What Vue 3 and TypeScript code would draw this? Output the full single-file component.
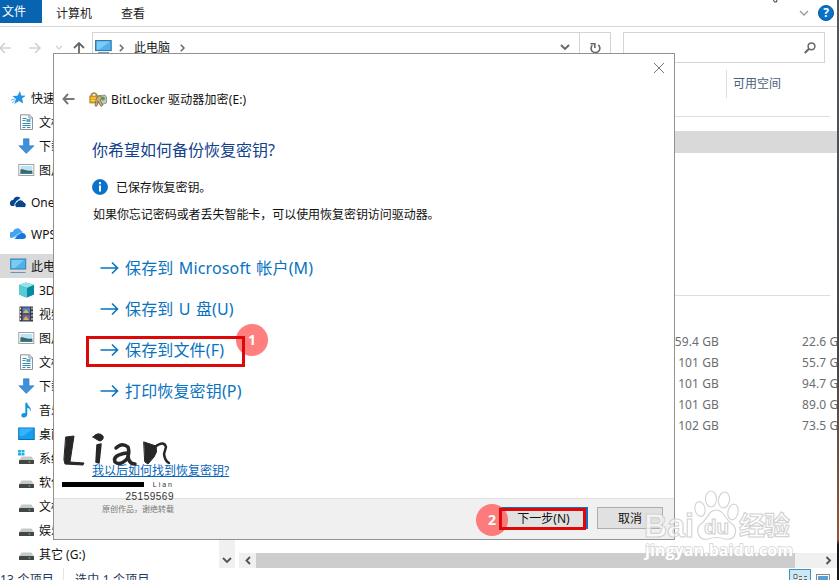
<script setup lang="ts">
interface NavItem {
  label: string
  icon: string
  level?: number
  gap?: boolean
  active?: boolean
}

const navItems: NavItem[] = [
  { label: '快速访问', icon: 'star' },
  { label: '文档', icon: 'doc', level: 1 },
  { label: '下载', icon: 'down', level: 1 },
  { label: '图片', icon: 'pic', level: 1 },
  { label: 'OneDrive', icon: 'onedrive', gap: true },
  { label: 'WPS网盘', icon: 'wps', gap: true },
  { label: '此电脑', icon: 'pc', gap: true, active: true },
  { label: '3D 对象', icon: 'cube', level: 1 },
  { label: '视频', icon: 'film', level: 1 },
  { label: '图片', icon: 'pic', level: 1 },
  { label: '文档', icon: 'doc', level: 1 },
  { label: '下载', icon: 'down', level: 1 },
  { label: '音乐', icon: 'music', level: 1 },
  { label: '桌面', icon: 'desk', level: 1 },
  { label: '系统', icon: 'sysdrive', level: 1 },
  { label: '软件', icon: 'drive', level: 1 },
  { label: '文档', icon: 'drive', level: 1 },
  { label: '娱乐', icon: 'drive', level: 1 },
  { label: '其它 (G:)', icon: 'drive', level: 1 },
]

const drives = [
  { total: '59.4 GB', free: '22.6 GB' },
  { total: '101 GB', free: '55.7 GB' },
  { total: '101 GB', free: '94.7 GB' },
  { total: '101 GB', free: '89.0 GB' },
  { total: '102 GB', free: '73.5 GB' },
]

const options = ['保存到 Microsoft 帐户(M)', '保存到 U 盘(U)', '保存到文件(F)', '打印恢复密钥(P)']
</script>

<template>
  <div class="screen">
    <div class="explorer">
      <header class="menu">
        <span class="tab-file">文件</span>
        <span class="tab">计算机</span>
        <span class="tab view">查看</span>
        <svg class="menu-chev" width="10" height="6" viewBox="0 0 10 6"><path d="M1 1l4 4 4-4" fill="none" stroke="#999" stroke-width="1.3" /></svg>
        <span class="help">?</span>
      </header>
      <div class="toolbar">
        <svg class="history" width="92" height="30" viewBox="0 0 92 30" fill="none">
          <g stroke="#d2d2d2" stroke-width="1.6"><path d="M11 16H0M5 11l-5 5 5 5" /><path d="M29 16h11M35 11l5 5-5 5" /><path d="M56 14l3 3 3-3" stroke-width="1.2" /></g>
          <path d="M79 23V11M74 16l5-5 5 5" stroke="#666" stroke-width="1.8" />
        </svg>
        <div class="address">
          <svg width="18" height="15" viewBox="0 0 18 15"><rect x=".6" y=".6" width="15.6" height="10" fill="#4db2ee" stroke="#286f9c" /><path d="M2 1.500h13L4 9.500H2z" fill="#7ccaf5" /><path d="M3 12.500h11" stroke="#7aa0b5" /></svg>
          <svg class="crumb" width="5" height="8" viewBox="0 0 5 8"><path d="M.8.8L4 4 .8 7.200" fill="none" stroke="#666" stroke-width="1.500" /></svg>
          <span class="path">此电脑</span>
          <svg class="crumb end" width="5" height="8" viewBox="0 0 5 8"><path d="M.8.8L4 4 .8 7.200" fill="none" stroke="#666" stroke-width="1.500" /></svg>
          <svg class="drop" width="10" height="7" viewBox="0 0 10 7"><path d="M1 1l4 4 4-4" fill="none" stroke="#666" stroke-width="1.900" /></svg>
          <span class="refresh"><svg width="12" height="12" viewBox="0 0 12 12"><path d="M9.200 2.800A4.400 4.400 0 1 1 3.300 3.200M1.500 1.700h4.300V6" fill="none" stroke="#666" stroke-width="1.600" /></svg></span>
        </div>
        <div class="search"><svg width="12" height="12" viewBox="0 0 12 12" fill="none" stroke="#666"><circle cx="7.500" cy="4.300" r="3.400" stroke-width="1.500" /><path d="M5 6.800L.8 11" stroke-width="2" /></svg></div>
      </div>
      <div class="body">
        <nav class="nav">
          <div v-for="(item, i) in navItems" :key="i" class="nav-row" :class="{ child: item.level, gap: item.gap, active: item.active }">
            <svg class="nav-icon" width="17" height="16" viewBox="0 0 17 16">
              <template v-if="item.icon === 'star'"><path d="M10 1l1.200 4.500 4.500.2-3.600 2.900 1.100 5-4.200-2.600-4.600 3 1.600-5.100-3.500-2.900 5-.3z" fill="#2794e3" /><path d="M1 10l4-1M2 13l4-3" stroke="#64b9f2" /></template>
              <template v-else-if="item.icon === 'doc'"><path d="M2.500.8h9l3 3v11.700h-12z" fill="#fafcfd" stroke="#8c9499" /><path d="M11 1v3h3.500" fill="none" stroke="#8c9499" /><path d="M4.500 4.500h4M4.500 6.500h3M4.500 9.500h8M4.500 11.500h8M4.500 13.500h3M9 13.500h3.500" stroke="#3a8dab" /><rect x="8.500" y="5" width="4" height="3" fill="#5ba7cc" /></template>
              <path v-else-if="item.icon === 'down'" d="M5.500.8h5.500v7h5L8.300 15.500.8 7.800h4.700z" fill="#3d91dc" stroke="#2a75bb" stroke-width=".6" />
              <template v-else-if="item.icon === 'pic'"><rect x=".8" y="2.500" width="15" height="11" fill="#fff" stroke="#a2a2a2" /><path d="M2.500 4h11.800v8H2.500z" fill="#bce2f5" /><path d="M2.500 7.500c3-1 5 2 11.800 1V12H2.500z" fill="#36685c" /><path d="M2.500 10.500h11.800V12H2.500z" fill="#3f78a1" /></template>
              <template v-else-if="item.icon === 'onedrive'"><path d="M1.500 12A3.200 3.200 0 0 1 3.200 6 4.300 4.300 0 0 1 10.500 4L6 7.500 4.500 12z" fill="#07478f" /><path d="M6.500 13.500A3 3 0 0 1 6.800 8a4 4 0 0 1 7.200.2 2.800 2.800 0 0 1 .5 5.300z" fill="#07478f" stroke="#fff" stroke-width=".8" /></template>
              <template v-else-if="item.icon === 'wps'"><path d="M1.500 12A3 3 0 0 1 3 6a4.300 4.300 0 0 1 8-1.500c2 1 1 3 2 4z" fill="#43a4f4" /><path d="M4 13c2 0 3-5 7-6 3-.5 5 1.500 5 3.500 0 1.500-1 2.500-3 2.500z" fill="#1677da" /><path d="M3 12q4-4 8-5" fill="none" stroke="#b8ddff" stroke-width=".8" /></template>
              <template v-else-if="item.icon === 'pc'"><rect x=".7" y="1" width="15" height="10" fill="#4bb2ec" stroke="#3281b6" /><path d="M1.500 2H14L5 10H1.500z" fill="#7acbf4" /><path d="M.5 14.500h15" stroke="#6696b4" /></template>
              <template v-else-if="item.icon === 'cube'"><path d="M1 3l7-2.500L16 3v9.500l-8 3-7-3z" fill="#20aabd" /><path d="M1 3l7-2.500L16 3 9 6z" fill="#95e3e7" /><path d="M1 3l8 3v9.500l-8-3z" fill="#54cbd5" /><path d="M16 3v9.500L9 15.500V6z" fill="#078ba5" /></template>
              <template v-else-if="item.icon === 'film'"><rect x="1.500" y=".5" width="13.500" height="15" fill="#363940" /><path d="M2.500 1.500v14M14 1.500v14" stroke="#ddd" stroke-dasharray="2 1.500" stroke-width="1.200" /><rect x="4.500" y="1.500" width="7.500" height="6" fill="#537fc7" /><rect x="4.500" y="8.500" width="7.500" height="6" fill="#6f60a3" /><path d="M5 7l3-4 3 4M5 14l3-4 3 4" fill="#d5b64d" /></template>
              <path v-else-if="item.icon === 'music'" d="M7.300.8h2c0 3.500 4.800 4 3.200 9-.3-2.700-1.200-3.500-3.200-4v6.700c0 3.600-6 4-6 1 0-2.200 2.200-2.900 4-2.300z" fill="#1496df" />
              <template v-else-if="item.icon === 'desk'"><rect x=".7" y="2" width="15.500" height="11.500" fill="#159ff0" stroke="#0870b3" /><path d="M1.500 2.500h14L5 10H1.500z" fill="#35b4fb" /></template>
              <template v-else><path d="M3.500 6.500h10l2.500 4H1z" fill="#c7c8c8" /><rect x="1" y="10" width="15" height="4" rx=".5" fill="#454747" /><circle cx="11.500" cy="12" r=".8" fill="#5fda65" /><path v-if="item.icon === 'sysdrive'" d="M0 0h3v2.500H0zM3.500 0h3v2.500h-3zM0 3h3v2.500H0zM3.500 3h3v2.500h-3z" fill="#20b1ea" /></template>
            </svg>
            <span>{{ item.label }}</span>
          </div>
        </nav>
        <div class="nav-scroll"><svg width="10" height="7" viewBox="0 0 10 7"><path d="M1 1l4 4 4-4" fill="none" stroke="#555" stroke-width="1.900" /></svg></div>
        <main class="files">
          <div class="columns"><span class="col-free">可用空间</span></div>
          <div class="rule first"></div>
          <div class="selected"></div>
          <div class="rule second"></div>
          <div class="drive-list">
            <div v-for="(d, i) in drives" :key="i" class="drive-row"><span class="total">{{ d.total }}</span><span class="free">{{ d.free }}</span></div>
          </div>
          <div class="hscroll">
            <svg width="17" height="15" viewBox="0 0 17 15"><path d="M11 4L7.500 7.500 11 11" fill="none" stroke="#555" stroke-width="1.900" /></svg>
            <span class="thumb"></span>
            <svg class="right-arrow" width="17" height="15" viewBox="0 0 17 15"><path d="M6.500 4L10 7.500 6.500 11" fill="none" stroke="#555" stroke-width="1.900" /></svg>
          </div>
        </main>
      </div>
      <footer class="status">
        <span class="count">13 个项目</span><span class="picked">选中 1 个项目</span>
        <span class="views">
          <svg width="22" height="14" viewBox="0 0 22 14"><rect x=".5" y=".5" width="21" height="16" fill="#cce8f5" stroke="#3b94bd" /><path d="M5 5.500h3v4H5zM10 7.500h3M15 7.500h3M10 10.500h3M15 10.500h3" fill="#fff" stroke="#666" /></svg>
          <svg width="14" height="14" viewBox="0 0 14 14"><rect x=".5" y="5.500" width="13" height="11" fill="#fff" stroke="#888" /><path d="M2 7h10v6H2z" fill="#5b9ed4" /></svg>
        </span>
      </footer>
    </div>
    <div class="desktop-edge"></div>
    <svg class="cursor-tip" width="5" height="3" viewBox="0 0 5 3"><path d="M.5 0l1 2h2l.5-2" fill="#fff" stroke="#333" /></svg>

    <section class="dialog">
      <div class="dialog-close"><svg width="12" height="12" viewBox="0 0 12 12"><path d="M1 1l10 10M11 1L1 11" stroke="#777" /></svg></div>
      <div class="dialog-title">
        <svg class="back" width="13" height="12" viewBox="0 0 13 12"><path d="M12.500 6H1.500M6 1L1.500 6 6 11" fill="none" stroke="#777" stroke-width="1.900" /></svg>
        <svg class="lock" width="18" height="17" viewBox="0 0 18 17"><path d="M2.500 7V3.500a3 3 0 0 1 5 0V7" fill="none" stroke="#a68a4c" stroke-width="1.700" /><path d="M8 5l8-1 1.500 2v6l-6 2-3-3z" fill="#c4cbc6" stroke="#777" stroke-width=".7" /><rect x=".8" y="5" width="8" height="7" fill="#dfa71d" stroke="#a47915" stroke-width=".7" /><path d="M2 7h6M2 9.500h6" stroke="#f8d95c" /><circle cx="14" cy="7.500" r="2" fill="#54a44d" /><path d="M8 6q4-3 5 1l-2 2 3 5-2 1.500L9 10l-1 5H6l1-6z" fill="#c9ae78" stroke="#77684b" stroke-width=".8" /></svg>
        <span>BitLocker 驱动器加密(E:)</span>
      </div>
      <h1>你希望如何备份恢复密钥?</h1>
      <div class="notice"><svg width="16" height="16" viewBox="0 0 16 16"><circle cx="8" cy="8" r="7.600" fill="#0873cf" stroke="#085fae" stroke-width=".6" /><path d="M8 3v2.200M8 6.500v6" stroke="#fff" stroke-width="2" /></svg><span>已保存恢复密钥。</span></div>
      <p>如果你忘记密码或者丢失智能卡，可以使用恢复密钥访问驱动器。</p>
      <div class="options">
        <div v-for="option in options" :key="option" class="option">
          <svg width="19" height="14" viewBox="0 0 19 14"><path d="M.5 7h17M12 1.500L17.500 7 12 12.500" fill="none" stroke="#0873bf" stroke-width="1.600" /></svg>
          <span>{{ option }}</span>
        </div>
      </div>
      <a class="faq">我以后如何找到恢复密钥?</a>
      <div class="actions"><button class="next">下一步(N)</button><button>取消</button></div>
    </section>

    <div class="badge one">1</div>
    <div class="outline file-outline"></div>
    <div class="badge two">2</div>
    <div class="outline next-outline"></div>

    <div class="signature">
      <svg class="brush" width="112" height="38" viewBox="0 0 112 38" fill="#272727" stroke="#272727" stroke-linecap="round" stroke-linejoin="round">
        <path d="M4 5L12 4 8 30 22 31 21 33 3 32 2 28Z" stroke-width="1" />
        <path d="M35 13L39 12 37 31 34 30Z" stroke-width="1.500" /><path d="M31 5Q36-1 41 4Q42 8 38 9Q35 8 31 5Z" stroke-width="1" />
        <path d="M54 16Q60 10 66 15Q68 21 65 27Q58 34 53 30Q50 23 65 21M66 22Q66 32 73 32" fill="none" stroke-width="3.500" />
        <path d="M82 10L94 14Q96 20 92 25L86 32 83 30Z" stroke-width="1" /><path d="M93 15Q102 8 104 15L102 22Q103 29 107 31" fill="none" stroke-width="2.500" />
      </svg>
      <div class="sign-line"><i></i><span>Lian</span></div>
      <div class="number">25159569</div>
      <div class="origin">原创作品，谢绝转载</div>
    </div>

    <svg class="watermark" width="158" height="76" viewBox="0 0 158 76">
      <g fill="#fff" fill-opacity=".65" stroke="#d2d2d2" stroke-width="1.100">
        <ellipse cx="58" cy="19" rx="5" ry="7.500" transform="rotate(-12 58 19)" /><ellipse cx="69" cy="9" rx="5.500" ry="8" /><ellipse cx="82" cy="10" rx="5.500" ry="8" transform="rotate(10 82 10)" /><ellipse cx="91" cy="22" rx="5" ry="8" transform="rotate(12 91 22)" />
        <path d="M74 20C67 20 66 28 60 33C52 39 56 51 66 49Q74 46 83 49C94 51 97 39 89 33C82 28 82 20 74 20Z" />
        <text x="2" y="47" font-size="33" font-weight="700" textLength="50" lengthAdjust="spacingAndGlyphs">Bai</text><text x="62" y="44" font-size="20" font-weight="700" textLength="25" lengthAdjust="spacingAndGlyphs">du</text><text x="97" y="45" font-size="26" font-weight="700" textLength="51">经验</text>
      </g>
      <text class="watermark-url" x="3" y="66" font-size="16" font-weight="700" textLength="148" lengthAdjust="spacingAndGlyphs" fill="#fff" stroke="#d0d0d0" stroke-width="1.400" paint-order="stroke">jingyan.baidu.com</text>
    </svg>
  </div>
</template>

<style>
body { margin: 0; overflow: hidden; }
</style>
<style scoped>
* { box-sizing: border-box; }
.screen { position: relative; width: 839px; height: 580px; display: flex; overflow: hidden; background: #fff; color: #222; font: 12px/16px "Noto Sans", "Noto Sans CJK SC", sans-serif; }
svg { display: block; flex: none; }
.explorer { width: 837px; height: 580px; display: flex; flex-direction: column; overflow: hidden; }
.desktop-edge { width: 2px; background: linear-gradient(#555761 0, #45464e 60%, #6e5140 78%, #9a522e 93%, #15151a 94%); }
.menu { height: 27px; flex: none; display: flex; align-items: center; border-bottom: 1px solid #d6d6d6; }
.tab-file { width: 42px; height: 23px; align-self: flex-start; padding: 4px 0 0 2px; background: #0863b1; color: #fff; line-height: 16px; }
.tab { margin-left: 14px; padding-top: 1px; }
.tab.view { margin-left: 29px; }
.menu-chev { margin-left: auto; margin-right: 9px; }
.help { width: 16px; height: 16px; margin-right: 3px; border-radius: 50%; background: #0872c9; border: 1px solid #07569d; color: #fff; text-align: center; font-weight: 700; line-height: 14px; }
.toolbar { height: 43px; flex: none; padding-top: 5px; display: flex; }
.address { width: 519px; height: 31px; border: 1px solid #d4d4d4; display: flex; align-items: center; padding-left: 2px; }
.crumb { margin-left: 6px; }
.path { margin-left: 10px; }
.crumb.end { margin-left: 10px; }
.drop { margin-left: auto; margin-right: 9px; }
.refresh { width: 31px; height: 29px; border-left: 1px solid #d4d4d4; display: flex; justify-content: center; align-items: center; }
.search { width: 202px; height: 31px; margin-left: 12px; border: 1px solid #d4d4d4; display: flex; justify-content: flex-end; align-items: center; padding-right: 8px; }
.body { height: 498px; flex: none; display: flex; }
.nav { width: 219px; padding-top: 16px; color: #111; }
.nav-row { height: 24px; display: flex; align-items: center; gap: 5px; padding-left: 10px; white-space: nowrap; }
.nav-row.child { padding-left: 18px; }
.nav-row.gap { margin-top: 8px; }
.nav-row.active { background: #d9d9d9; }
.nav-icon + span { margin-left: -1px; padding-top: 1px; }
.nav-scroll { width: 16px; background: #f0f0f0; display: flex; align-items: flex-end; justify-content: center; padding-bottom: 4px; }
.files { flex: 1; margin-left: 4px; display: flex; flex-direction: column; }
.columns { height: 28px; display: flex; justify-content: flex-end; }
.col-free { width: 111px; border-left: 1px solid #e0e0e0; padding: 6px 0 0 6px; color: #4c607a; }
.rule { height: 1px; margin-right: 7px; background: #dedede; }
.rule.first { margin-top: 18px; }
.selected { height: 22px; margin-top: 14px; background: #d9d9d9; }
.rule.second { margin-top: 142px; }
.drive-list { margin-top: 35px; display: flex; flex-direction: column; }
.drive-row { height: 21px; display: flex; align-items: center; color: #6d6d6d; white-space: nowrap; letter-spacing: .1px; }
.total { width: 480px; text-align: right; }
.free { margin-left: 83px; width: 35px; overflow: hidden; }
.hscroll { height: 15px; margin-top: auto; background: #f0f0f0; display: flex; }
.thumb { width: 539px; background: #cdcdcd; }
.right-arrow { margin-left: auto; }
.status { height: 12px; flex: none; display: flex; color: #1e395b; white-space: nowrap; letter-spacing: .2px; }
.status > span { padding-top: 4px; }
.count { width: 64px; border-right: 1px solid #e5e5e5; }
.picked { margin-left: 11px; }
.status .views { display: flex; gap: 5px; margin-left: auto; padding: 1px 7px 0 0; }
.cursor-tip { position: absolute; left: 773px; top: 0; }
.dialog { position: absolute; left: 53px; top: 53px; width: 622px; height: 487px; border: 1px solid #929292; background: #fff; display: flex; flex-direction: column; color: #111; }
.dialog-close { height: 28px; padding: 8px 9px 0 0; display: flex; justify-content: flex-end; }
.dialog-title { height: 34px; display: flex; align-items: center; padding-left: 8px; }
.dialog-title span { padding-top: 2px; letter-spacing: .13px; }
.back { margin-right: 14px; }
.lock { margin-right: 4px; }
h1 { height: 28px; margin: 20px 0 0 38px; font-size: 16px; font-weight: 400; line-height: 28px; color: #12418d; }
.notice { height: 24px; display: flex; align-items: center; gap: 8px; margin: 11px 0 0 38px; }
.notice span { padding-top: 2px; letter-spacing: -.1px; }
p { margin: 8px 0 0 39px; height: 16px; white-space: nowrap; letter-spacing: -.05px; }
.options { margin: 24px 0 0 46px; }
.option { height: 41px; display: flex; align-items: center; gap: 6px; font-size: 16px; line-height: 24px; color: #0873bf; letter-spacing: .15px; word-spacing: 1px; }
.faq { margin: 51px 0 0 38px; height: 18px; align-self: flex-start; color: #0865b8; text-decoration: underline; line-height: 18px; }
.actions { margin-top: auto; height: 41px; display: flex; justify-content: flex-end; align-items: flex-start; gap: 9px; padding: 8px 11px 0 0; background: #f0f0f0; border-top: 1px solid #dfdfdf; }
button { width: 66px; height: 22px; border: 1px solid #adadad; background: #e1e1e1; padding: 2px 0 0; font: inherit; line-height: 16px; color: #111; }
button.next { width: 89px; border: 2px solid #1670bf; padding-top: 1px; }
.outline { position: absolute; border: 3px solid #df0808; }
.file-outline { left: 86px; top: 336px; width: 159px; height: 31px; }
.next-outline { left: 499px; top: 508px; width: 87px; height: 22px; }
.badge { position: absolute; width: 32px; height: 32px; border-radius: 50%; background: rgba(255, 94, 94, .8); color: #fff; display: flex; align-items: center; justify-content: center; font: 700 14px/20px "Noto Sans", sans-serif; }
.badge.one { left: 236px; top: 324px; }
.badge.two { left: 476px; top: 504px; }
.signature { position: absolute; left: 62px; top: 432px; width: 112px; display: flex; flex-direction: column; color: #333; font-family: "Liberation Sans", "Noto Sans CJK SC", sans-serif; }
.sign-line { height: 9px; margin-top: 10px; display: flex; align-items: center; justify-content: space-between; font-size: 7px; line-height: 8px; letter-spacing: 2px; }
.sign-line i { width: 82px; height: 5px; background: #000; }
.number { height: 12px; margin-top: 2px; text-align: right; font-size: 10px; line-height: 12px; letter-spacing: .5px; }
.origin { margin-top: 1px; height: 11px; text-align: right; font-size: 8px; line-height: 11px; color: #777; }
.watermark { position: absolute; left: 642px; top: 490px; font-family: "Liberation Sans", "Noto Sans CJK SC", sans-serif; }
.watermark-url { font-family: "Open Sans", sans-serif; }
</style>
